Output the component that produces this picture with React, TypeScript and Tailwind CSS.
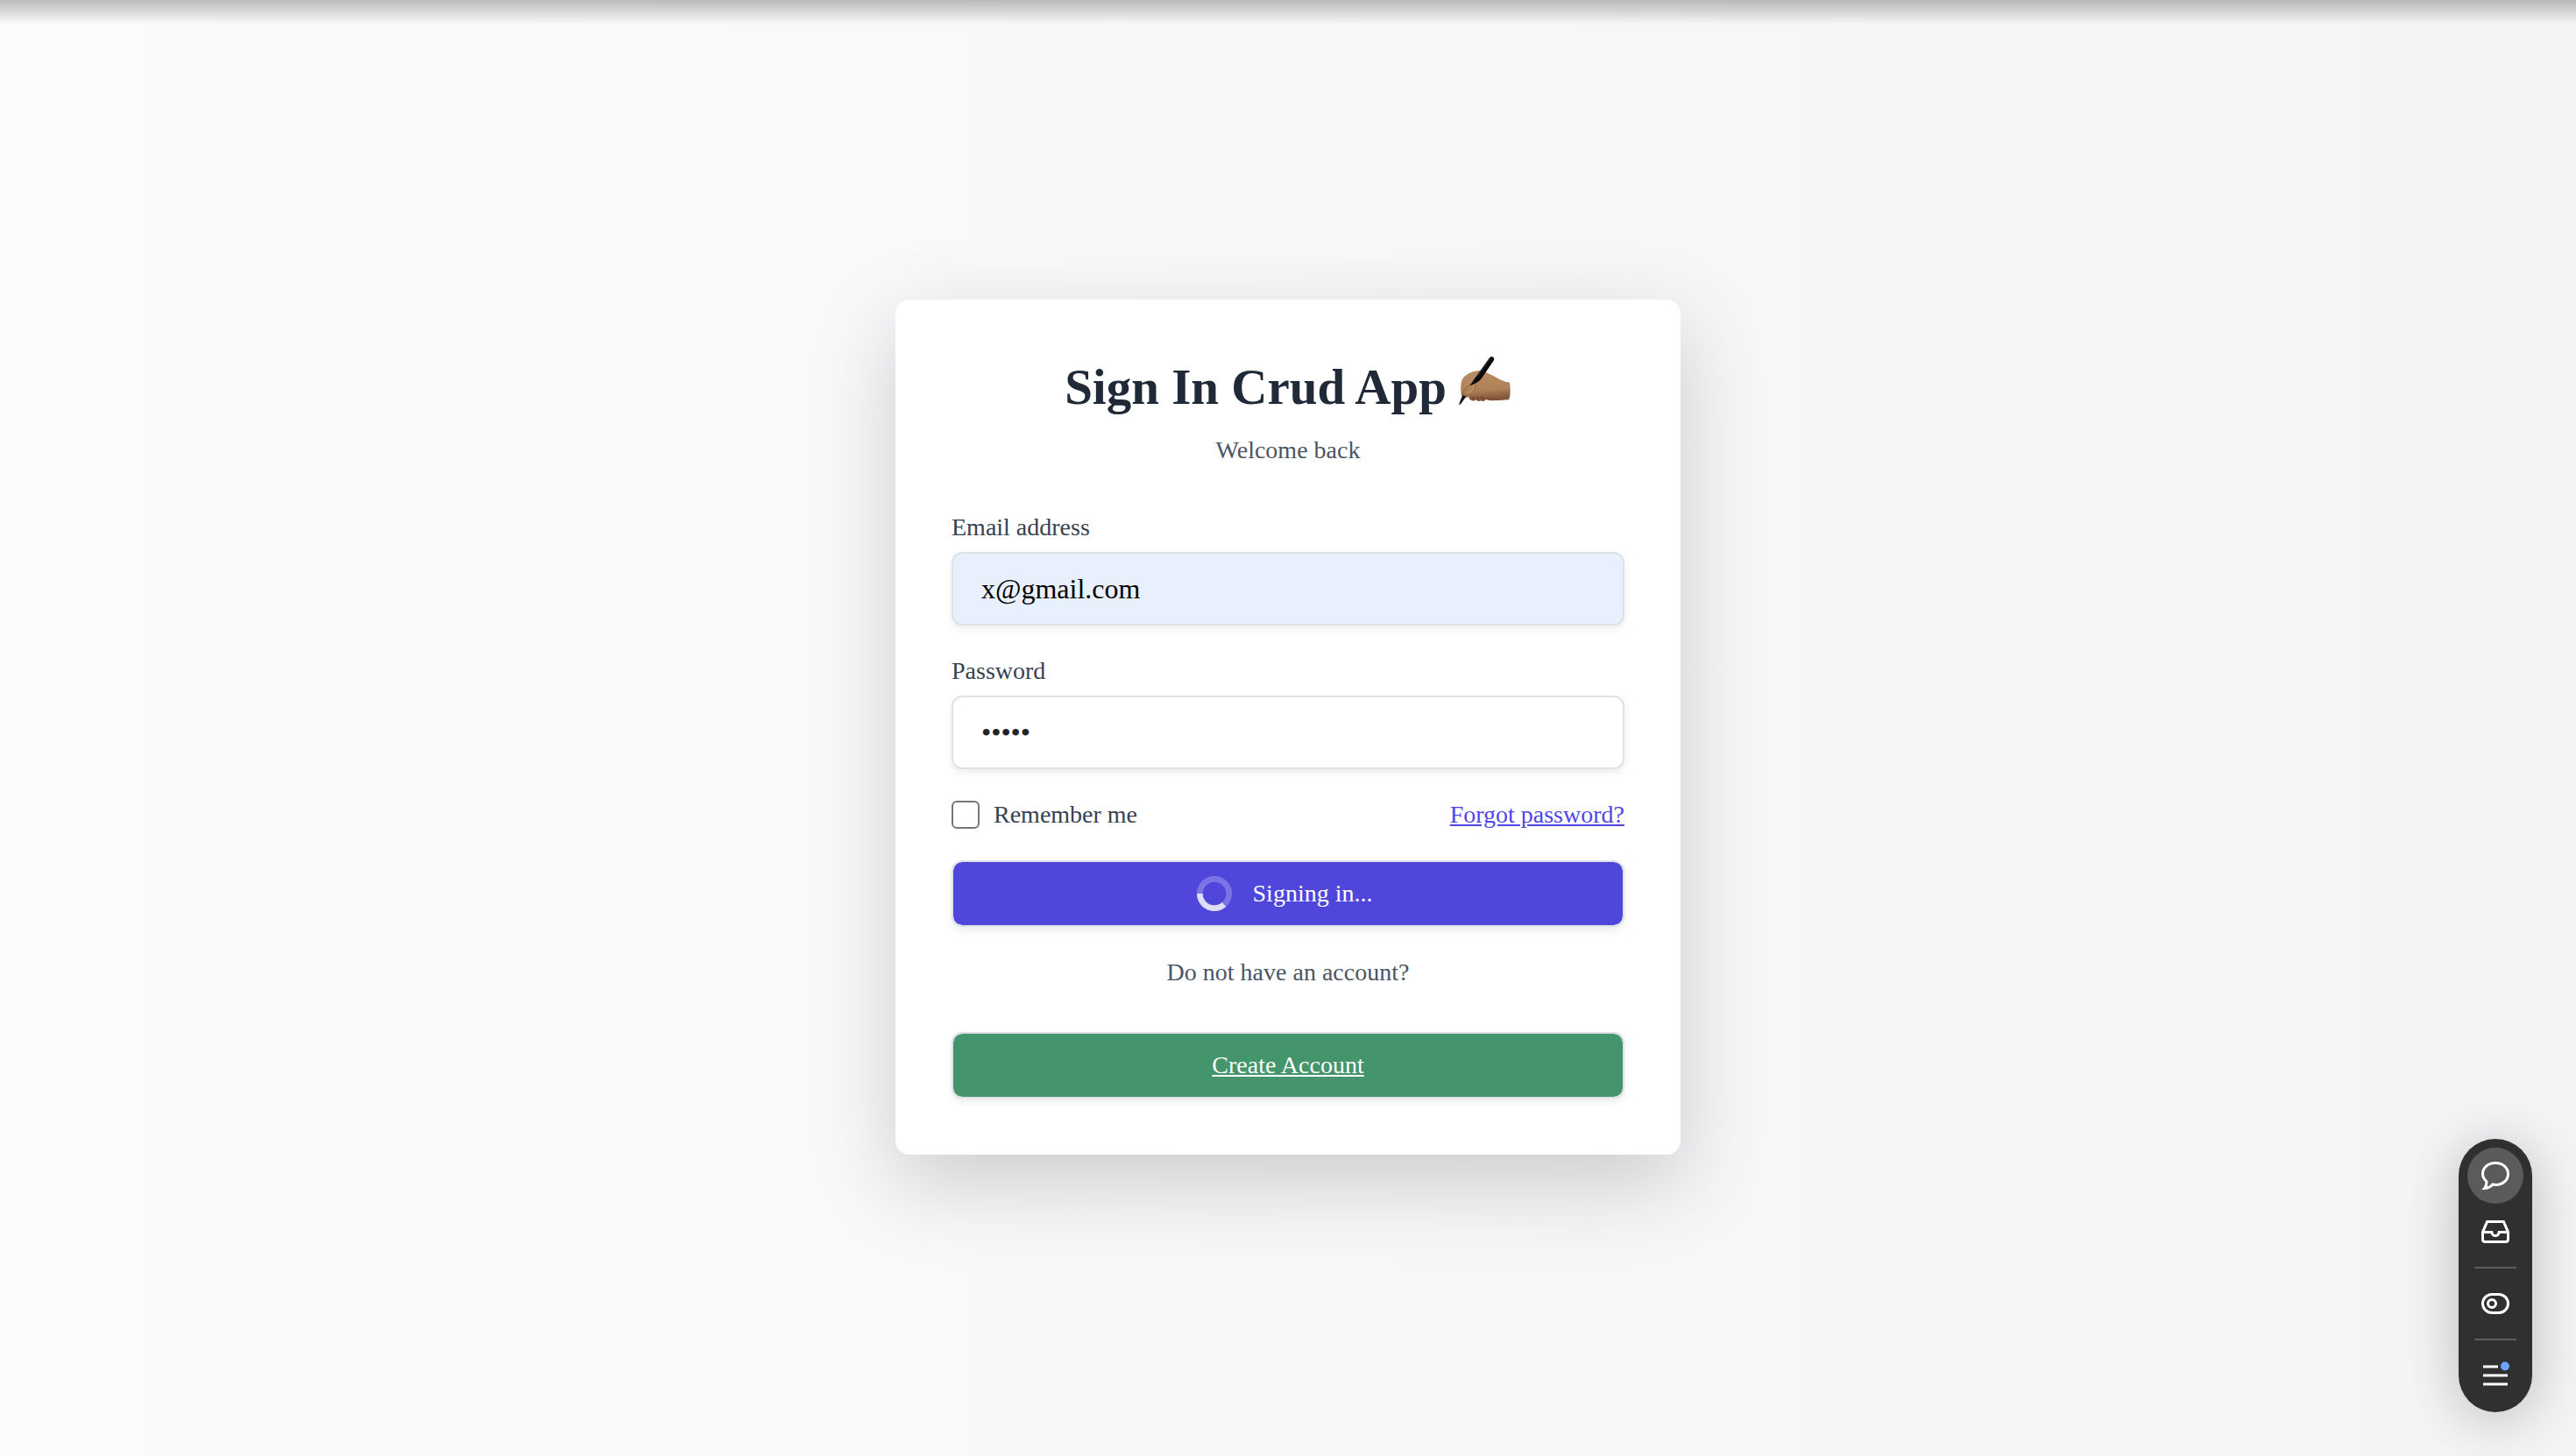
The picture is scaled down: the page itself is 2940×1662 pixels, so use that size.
import type { ReactNode } from "react";

const field =
  "mt-2 block h-[84px] w-full rounded-xl border-2 border-[#dee2e6] px-8 text-[32px] shadow-[0_4px_8px_rgba(0,0,0,0.075)] outline-none";
const action =
  "flex h-[76px] w-full items-center justify-center rounded-xl border-2 border-[#dee2e6] bg-clip-padding text-[28px] leading-10 text-white shadow-[0_4px_8px_rgba(0,0,0,0.075)]";

function WritingHand() {
  return (
    <svg viewBox="0 0 180 180" className="h-[60px] w-[60px] shrink-0" role="img" aria-label="Writing hand">
      <defs>
        <linearGradient id="skin" x1="0" y1="0" x2="0.15" y2="1">
          <stop offset="0" stopColor="#b98e66" />
          <stop offset="0.7" stopColor="#b08159" />
          <stop offset="1" stopColor="#83573a" />
        </linearGradient>
      </defs>
      <path d="M34 138 Q34 152 44 153 Q52 157 59 151 Q66 159 76 154 Q84 159 90 152 L108 136 L50 122Z" fill="#87593c" />
      <path d="M48 140 Q47 147 49 152 M63 140 Q66 147 65 153 M80 142 Q84 147 85 152" stroke="#5d3823" strokeWidth="2.5" fill="none" />
      <path
        d="M8 134 C6 110 6 92 12 80 C22 64 44 53 68 51 C94 54 112 66 134 78 C148 86 160 90 172 91 Q176 92 176 118 Q176 146 170 151 C150 152 132 153 116 154 C98 154 86 147 72 141 L34 141 C24 146 14 142 8 134Z"
        fill="url(#skin)"
      />
      <path d="M72 141 Q92 146 108 150 Q122 153 150 150" stroke="#7a4f33" strokeWidth="3" fill="none" />
      <path d="M14 134 Q16 116 28 108 Q36 103 42 98" stroke="#8b603f" strokeWidth="3" fill="none" />
      <path d="M56 98 Q58 118 46 126 Q38 132 32 140" stroke="#9a6d49" strokeWidth="3" fill="none" />
      <path d="M48 98 Q54 108 48 116 Q42 124 28 130" stroke="#c0946a" strokeWidth="4" strokeLinecap="round" fill="none" />
      <path d="M13 134 L25 140 L6 166 L1 169 L2 161Z" fill="#161616" />
      <path d="M38 102 L56 76 L104 8 Q110 0 118 5 Q123 9 119 17 L76 80 Q64 93 42 101Z" fill="#0b0b0b" />
      <path d="M63 72 L106 10" stroke="#4a4f56" strokeWidth="2" strokeLinecap="round" />
    </svg>
  );
}

function Spinner() {
  return (
    <svg viewBox="0 0 24 24" className="-ml-2 mr-6 h-10 w-10 -rotate-90" fill="none" aria-hidden="true">
      <circle className="opacity-25" cx="12" cy="12" r="10" stroke="currentColor" strokeWidth="4" />
      <path
        className="opacity-75"
        fill="currentColor"
        d="M4 12a8 8 0 018-8V0C5.373 0 0 5.373 0 12h4zm2 5.291A7.962 7.962 0 014 12H0c0 3.042 1.135 5.824 3 7.938l3-2.647z"
      />
    </svg>
  );
}

function Tool({ label, active, children }: { label: string; active?: boolean; children: ReactNode }) {
  return (
    <button
      type="button"
      aria-label={label}
      className={`flex h-16 w-16 items-center justify-center rounded-full text-white ${active ? "bg-[#5b5b5b]" : ""}`}
    >
      <svg viewBox="0 0 16 16" className="h-8 w-8" fill="none" stroke="currentColor" strokeWidth="1.5" aria-hidden="true">
        {children}
      </svg>
    </button>
  );
}

function Toolbar() {
  return (
    <aside
      aria-label="Page tools"
      className="fixed right-[50px] bottom-[50px] flex flex-col items-center rounded-full bg-[#303030] p-[10px] shadow-[0_8px_64px_rgba(0,0,0,0.24)]"
    >
      <Tool label="Comment" active>
        <path d="M2.9 11.3 C1.5 10 .75 8.6 .75 7 C.75 3.4 3.8 .75 8 .75 C12.2 .75 15.25 3.4 15.25 7 C15.25 10.6 12.2 13.2 8.3 13.2 C7.6 13.2 7 13.1 6.5 12.9 C5.4 14.4 4.1 15 1.8 15.2 C2.8 14 3.1 12.8 2.9 11.3Z" />
      </Tool>
      <Tool label="Inbox">
        <path d="M.75 8.2 L3.3 2.3 H12.7 L15.25 8.2 V12.2 Q15.25 13.75 13.7 13.75 H2.3 Q.75 13.75 .75 12.2Z M1 8.2 H5.9 Q6.2 10.3 8 10.3 Q9.8 10.3 10.1 8.2 H15" />
      </Tool>
      <hr className="my-2 h-0.5 w-12 border-0 bg-[#5b5b5b]" />
      <Tool label="Feature flags">
        <rect x=".75" y="2.75" width="14.5" height="10.5" rx="5.25" />
        <circle cx="6" cy="8" r="2.25" />
      </Tool>
      <hr className="my-2 h-0.5 w-12 border-0 bg-[#5b5b5b]" />
      <Tool label="Menu">
        <path d="M1 3 H9.5 M1 8 H15 M1 13 H15" />
        <circle cx="13.5" cy="2.75" r="2.5" fill="#68a6fa" stroke="none" />
      </Tool>
    </aside>
  );
}

export default function App() {
  return (
    <div className="flex min-h-screen flex-col bg-linear-to-r from-[#f9fbfc] to-[#f3f4f6] font-['Liberation_Serif',serif]">
      <div className="h-7 w-full bg-linear-to-b from-black/25 to-transparent" />
      <main className="-mt-7 flex flex-1 items-center justify-center pb-0.5">
        <section className="w-full max-w-4xl rounded-2xl bg-white p-16 shadow-[0_32px_96px_rgba(0,0,0,0.175)]">
          <h1 className="flex items-start justify-center gap-[14px] text-[57px] leading-[72px] font-bold text-[#1f2937]">
            Sign In Crud App
            <WritingHand />
          </h1>
          <p className="mt-4 text-center text-[28px] leading-10 text-[#4b5563]">Welcome back</p>
          <form className="mt-12 flex flex-col gap-8" onSubmit={(event) => event.preventDefault()}>
            <div>
              <label htmlFor="email" className="block text-[28px] leading-10 text-[#374151]">
                Email address
              </label>
              <input id="email" type="email" defaultValue="x@gmail.com" className={`${field} bg-[#e8f0fe] text-black`} />
            </div>
            <div>
              <label htmlFor="password" className="block text-[28px] leading-10 text-[#374151]">
                Password
              </label>
              <input id="password" type="password" defaultValue="12345" className={`${field} bg-white text-[#212529]`} />
            </div>
            <div className="flex items-center justify-between text-[28px] leading-10">
              <div className="flex items-center gap-4">
                <input
                  id="remember"
                  type="checkbox"
                  className="h-8 w-8 appearance-none rounded-md border-2 border-[#767676] bg-white checked:bg-indigo-600"
                />
                <label htmlFor="remember" className="text-[#374151]">
                  Remember me
                </label>
              </div>
              <a href="#forgot" className="text-[#4f46e5] underline">
                Forgot password?
              </a>
            </div>
            <button type="submit" className={`${action} bg-[#4f46dc]`}>
              <Spinner />
              Signing in...
            </button>
          </form>
          <p className="mt-8 text-center text-[28px] leading-10 text-[#4b5563]">Do not have an account?</p>
          <a href="#create" className={`${action} mt-12 bg-[#44946c] underline`}>
            Create Account
          </a>
        </section>
      </main>
      <Toolbar />
    </div>
  );
}
